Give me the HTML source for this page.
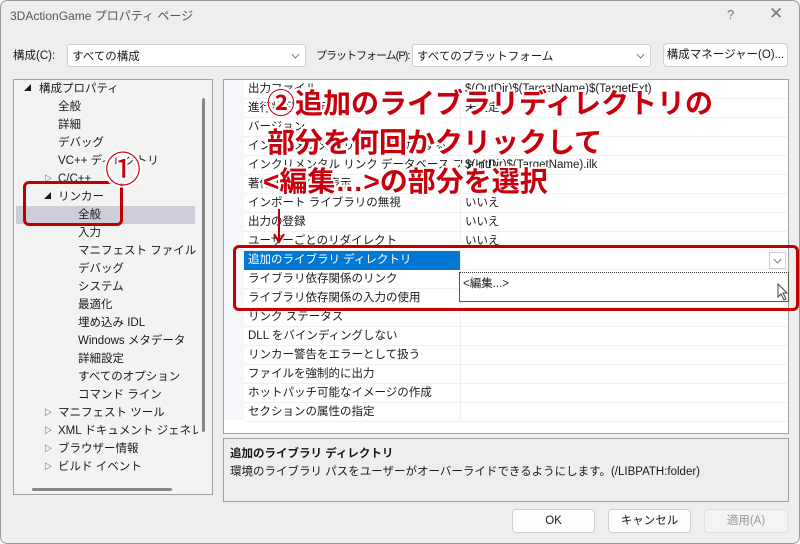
<!DOCTYPE html>
<html><head><meta charset="utf-8"><style>
*{box-sizing:border-box;margin:0;padding:0}
body{width:800px;height:544px;background:#fff;font-family:"Liberation Sans","Noto Sans CJK JP",sans-serif;font-size:11.5px;color:#1a1a1a;position:relative;overflow:hidden}
.dlg{position:absolute;left:0;top:0;width:800px;height:544px;background:#eeeeee;border:1px solid #9a9a9a;border-radius:7px}
.abs{position:absolute;white-space:nowrap}
.combo{position:absolute;background:#fff;border:1px solid #cfcfcf;border-radius:3px;height:23px;padding:3px 0 0 4px}
.chev{position:absolute;right:6px;top:6px;width:7px;height:7px;border-right:1px solid #666;border-bottom:1px solid #666;transform:rotate(45deg) scale(.8)}
.btn{position:absolute;background:#fdfdfd;border:1px solid #d0d0d0;border-radius:4px;height:24px;text-align:center;line-height:22px}
.tree{position:absolute;left:12px;top:78px;width:200px;height:416px;border:1px solid #a0a0a0;background:#f3f3f3}
.ti{position:absolute;white-space:nowrap;line-height:18px;height:18px}
.grid{position:absolute;left:222px;top:78px;width:566px;height:355px;border:1px solid #a0a0a0;background:#fff}
.row{position:absolute;left:20px;width:543px;height:19px;border-bottom:1px solid #eef0f3;line-height:18px}
.row .l{position:absolute;left:4px;top:0}
.row .v{position:absolute;left:216px;top:0;height:19px;border-left:1px solid #eef0f3;padding-left:4px}
.red{position:absolute;border:3px solid #c00000;border-radius:6px}
.ann{position:absolute;white-space:nowrap;color:#c8000c;font-weight:bold;font-size:28px;line-height:38px;text-shadow:-2px 0 #fff,2px 0 #fff,0 -2px #fff,0 2px #fff,-2px -2px #fff,2px 2px #fff,-2px 2px #fff,2px -2px #fff}
</style></head><body>
<div class="dlg">
<div class="abs" style="left:9px;top:6px;color:#555;font-size:12px">3DActionGame プロパティ ページ</div>
<div class="abs" style="left:726px;top:6px;color:#777;font-size:13px">?</div>
<div class="abs" style="left:768px;top:3px;color:#777;font-size:17px">✕</div>

<div class="abs" style="left:12px;top:46px">構成(C):</div>
<div class="combo" style="left:66px;top:43px;width:239px">すべての構成<div class="chev"></div></div>
<div class="abs" style="left:315px;top:46px;letter-spacing:-1px;font-size:11px">プラットフォーム(P):</div>
<div class="combo" style="left:411px;top:43px;width:239px">すべてのプラットフォーム<div class="chev"></div></div>
<div class="btn" style="left:662px;top:42px;width:125px">構成マネージャー(O)...</div>

<div class="tree">
<div class="ti" style="left:10px;top:0;font-size:7px">◢</div><div class="ti" style="left:25px;top:0">構成プロパティ</div>
<div class="ti" style="left:44px;top:18px">全般</div>
<div class="ti" style="left:44px;top:36px">詳細</div>
<div class="ti" style="left:44px;top:54px">デバッグ</div>
<div class="ti" style="left:44px;top:72px">VC++ ディレクトリ</div>
<div class="ti" style="left:30px;top:90px;font-size:8px">▷</div><div class="ti" style="left:44px;top:90px">C/C++</div>
<div class="ti" style="left:30px;top:108px;font-size:7px">◢</div><div class="ti" style="left:44px;top:108px">リンカー</div>
<div class="ti" style="left:2px;top:126px;width:179px;background:#cccdd9"></div><div class="ti" style="left:64px;top:126px">全般</div>
<div class="ti" style="left:64px;top:144px">入力</div>
<div class="ti" style="left:64px;top:162px">マニフェスト ファイル</div>
<div class="ti" style="left:64px;top:180px">デバッグ</div>
<div class="ti" style="left:64px;top:198px">システム</div>
<div class="ti" style="left:64px;top:216px">最適化</div>
<div class="ti" style="left:64px;top:234px">埋め込み IDL</div>
<div class="ti" style="left:64px;top:252px">Windows メタデータ</div>
<div class="ti" style="left:64px;top:270px">詳細設定</div>
<div class="ti" style="left:64px;top:288px">すべてのオプション</div>
<div class="ti" style="left:64px;top:306px">コマンド ライン</div>
<div class="ti" style="left:30px;top:324px;font-size:8px">▷</div><div class="ti" style="left:44px;top:324px">マニフェスト ツール</div>
<div class="ti" style="left:30px;top:342px;font-size:8px">▷</div><div class="ti" style="left:44px;top:342px;width:140px;overflow:hidden">XML ドキュメント ジェネレーター</div>
<div class="ti" style="left:30px;top:360px;font-size:8px">▷</div><div class="ti" style="left:44px;top:360px">ブラウザー情報</div>
<div class="ti" style="left:30px;top:378px;font-size:8px">▷</div><div class="ti" style="left:44px;top:378px">ビルド イベント</div>
<div class="abs" style="left:188px;top:18px;width:3px;height:334px;background:#888;border-radius:2px"></div>
<div class="abs" style="left:18px;top:408px;width:140px;height:3px;background:#888;border-radius:2px"></div>
</div>

<div class="grid">
<div class="abs" style="left:0;top:0;width:20px;height:340px;background:#f5f7fa"></div>
<div class="row" style="top:0"><span class="l">出力ファイル</span><span class="v">$(OutDir)$(TargetName)$(TargetExt)</span></div>
<div class="row" style="top:19px"><span class="l">進行状況の表示</span><span class="v">未設定</span></div>
<div class="row" style="top:38px"><span class="l">バージョン</span><span class="v"></span></div>
<div class="row" style="top:57px"><span class="l">インクリメンタル リンクを有効にする</span><span class="v"></span></div>
<div class="row" style="top:76px"><span class="l">インクリメンタル リンク データベース ファイル</span><span class="v">$(IntDir)$(TargetName).ilk</span></div>
<div class="row" style="top:95px"><span class="l">著作権情報の非表示</span><span class="v"></span></div>
<div class="row" style="top:114px"><span class="l">インポート ライブラリの無視</span><span class="v">いいえ</span></div>
<div class="row" style="top:133px"><span class="l">出力の登録</span><span class="v">いいえ</span></div>
<div class="row" style="top:152px"><span class="l">ユーザーごとのリダイレクト</span><span class="v">いいえ</span></div>
<div class="row" style="top:171px"><span class="l" style="left:0;width:216px;height:19px;background:#0078d4;color:#fff;padding-left:4px">追加のライブラリ ディレクトリ</span><span class="v"></span></div>
<div class="row" style="top:190px"><span class="l">ライブラリ依存関係のリンク</span><span class="v"></span></div>
<div class="row" style="top:209px"><span class="l">ライブラリ依存関係の入力の使用</span><span class="v">いいえ</span></div>
<div class="row" style="top:228px"><span class="l">リンク ステータス</span><span class="v"></span></div>
<div class="row" style="top:247px"><span class="l">DLL をバインディングしない</span><span class="v"></span></div>
<div class="row" style="top:266px"><span class="l">リンカー警告をエラーとして扱う</span><span class="v"></span></div>
<div class="row" style="top:285px"><span class="l">ファイルを強制的に出力</span><span class="v"></span></div>
<div class="row" style="top:304px"><span class="l">ホットパッチ可能なイメージの作成</span><span class="v"></span></div>
<div class="row" style="top:323px"><span class="l">セクションの属性の指定</span><span class="v"></span></div>
<div class="abs" style="left:545px;top:172px;width:17px;height:17px;border:1px solid #ccc;background:#fff"><div class="chev" style="right:4px;top:3px"></div></div>
<div class="abs" style="left:235px;top:192px;width:330px;height:30px;background:#fff;border:1px solid #555;border-top:1px dotted #333"><span class="abs" style="left:3px;top:2px">&lt;編集...&gt;</span>
<svg class="abs" style="left:317px;top:10px" width="12" height="18" viewBox="0 0 12 18"><path d="M1 1 L1 14 L4 11 L7 17 L9 16 L6 10 L10 10 Z" fill="#fff" stroke="#444" stroke-width="1"/></svg></div>
</div>

<div class="abs" style="left:222px;top:437px;width:566px;height:64px;border:1px solid #a0a0a0;background:#eeeeee">
<div class="abs" style="left:6px;top:6px;font-weight:bold">追加のライブラリ ディレクトリ</div>
<div class="abs" style="left:6px;top:24px">環境のライブラリ パスをユーザーがオーバーライドできるようにします。(/LIBPATH:folder)</div>
</div>

<div class="btn" style="left:511px;top:508px;width:83px">OK</div>
<div class="btn" style="left:607px;top:508px;width:83px">キャンセル</div>
<div class="btn" style="left:703px;top:508px;width:84px;color:#999;background:#f4f4f4;border-color:#e0e0e0">適用(A)</div>

<div class="red" style="left:22px;top:180px;width:100px;height:45px"></div>
<div class="red" style="left:232px;top:244px;width:566px;height:66px"></div>

<svg class="abs" style="left:270px;top:208px" width="16" height="36"><path d="M8 0 V32 M3 25 L8 33 L13 25" stroke="#c00000" stroke-width="2" fill="none"/></svg>
<div class="ann" style="left:104px;top:150px;font-size:36px;font-weight:normal">①</div>
<div class="ann" style="left:266px;top:84px">②追加のライブラリディレクトリの</div>
<div class="ann" style="left:266px;top:123px">部分を何回かクリックして</div>
<div class="ann" style="left:262px;top:162px">&lt;編集…&gt;の部分を選択</div>
</div>
</body></html>
